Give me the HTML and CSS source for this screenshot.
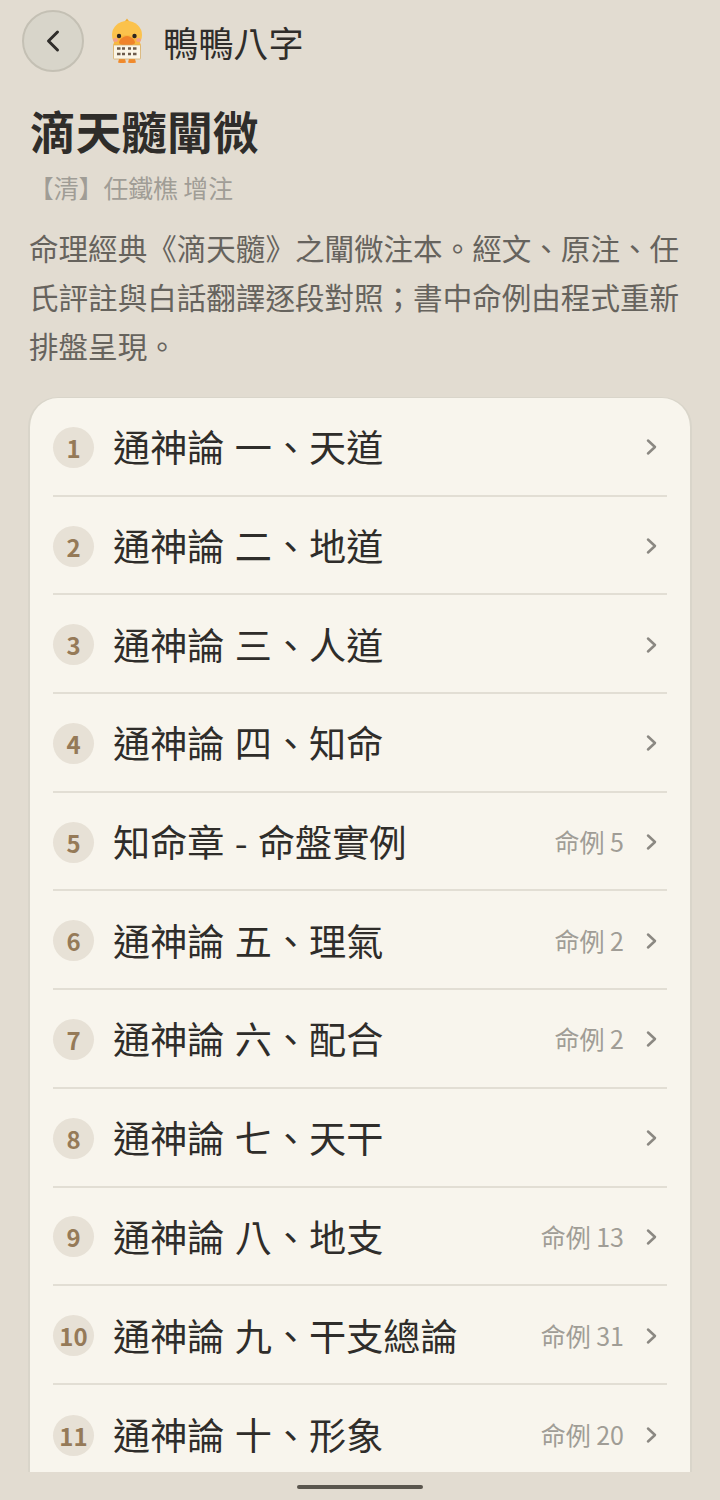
FILE: index.html
```html
<!DOCTYPE html>
<html lang="zh-Hant">
<head>
<meta charset="utf-8">
<title>滴天髓闡微</title>
<link rel="stylesheet" href="styles.css">
</head>
<body>
<div class="page">
  <header class="topbar">
    <button class="back" aria-label="返回">
      <svg viewBox="0 0 24 24" width="24" height="24"><path d="M16.500 3 7.500 12l9 9" fill="none" stroke="#2f2d2a" stroke-width="3" stroke-linecap="round" stroke-linejoin="round"/></svg>
    </button>
    <svg class="duck" viewBox="111 18 32 46" width="32" height="46" aria-hidden="true">
      <path d="M127 18.500c1 2 3 3 3.500 5.500h-7c.5-2.500 2.500-3.500 3.500-5.500z" fill="#f3ad2f"/>
      <ellipse cx="127" cy="35" rx="15" ry="14" fill="#fbc24c"/>
      <ellipse cx="127" cy="47" rx="14" ry="12" fill="#f8b83f"/>
      <path d="M119 59h6l1 3.500q-4 1-8 0zM129 59h6l1 3.500q-4 1-8 0z" fill="#f08a2c"/>
      <circle cx="119" cy="36" r="2.200" fill="#2b2320"/>
      <circle cx="134.500" cy="36" r="2.200" fill="#2b2320"/>
      <ellipse cx="115.500" cy="40" rx="2.500" ry="2" fill="#f3a08c"/>
      <ellipse cx="138.500" cy="40" rx="2.500" ry="2" fill="#f3a08c"/>
      <path d="M127 36c4 0 8 4 8 6.500 0 2-4 3-8 3s-8-1-8-3c0-2.500 4-6.500 8-6.500z" fill="#f0832a"/>
      <rect x="113.500" y="45" width="27" height="14" rx=".6" fill="#fbf5e6" stroke="#d2a75f" stroke-width=".7"/>
      <path d="M117 48.500h3.500M122 48.500h3M128 48.500h3M133 48.500h3.500M117 54h3.500M122 54h3M128 54h3M133 54h3.500" stroke="#6d5b4b" stroke-width="2.600"/>
    </svg>
    <span class="brand">鴨鴨八字</span>
  </header>

  <section class="intro">
    <h1 class="title">滴天髓闡微</h1>
    <p class="author">【清】任鐵樵 增注</p>
    <p class="desc">命理經典《滴天髓》之闡微注本。經文、原注、任氏評註與白話翻譯逐段對照；書中命例由程式重新排盤呈現。</p>
  </section>

  <div class="cardclip">
    <ul class="card">
      <li class="row"><span class="num">1</span><span class="name">通神論 一、天道</span><span class="chev"><svg viewBox="0 0 12 18" width="12" height="18"><path d="M2 2.500l7 6.500-7 6.500" fill="none" stroke="#8b8882" stroke-width="2.500" stroke-linecap="round" stroke-linejoin="round"/></svg></span></li>
      <li class="row"><span class="num">2</span><span class="name">通神論 二、地道</span><span class="chev"><svg viewBox="0 0 12 18" width="12" height="18"><path d="M2 2.500l7 6.500-7 6.500" fill="none" stroke="#8b8882" stroke-width="2.500" stroke-linecap="round" stroke-linejoin="round"/></svg></span></li>
      <li class="row"><span class="num">3</span><span class="name">通神論 三、人道</span><span class="chev"><svg viewBox="0 0 12 18" width="12" height="18"><path d="M2 2.500l7 6.500-7 6.500" fill="none" stroke="#8b8882" stroke-width="2.500" stroke-linecap="round" stroke-linejoin="round"/></svg></span></li>
      <li class="row"><span class="num">4</span><span class="name">通神論 四、知命</span><span class="chev"><svg viewBox="0 0 12 18" width="12" height="18"><path d="M2 2.500l7 6.500-7 6.500" fill="none" stroke="#8b8882" stroke-width="2.500" stroke-linecap="round" stroke-linejoin="round"/></svg></span></li>
      <li class="row"><span class="num">5</span><span class="name">知命章 - 命盤實例</span><span class="tag">命例 5</span><span class="chev"><svg viewBox="0 0 12 18" width="12" height="18"><path d="M2 2.500l7 6.500-7 6.500" fill="none" stroke="#8b8882" stroke-width="2.500" stroke-linecap="round" stroke-linejoin="round"/></svg></span></li>
      <li class="row"><span class="num">6</span><span class="name">通神論 五、理氣</span><span class="tag">命例 2</span><span class="chev"><svg viewBox="0 0 12 18" width="12" height="18"><path d="M2 2.500l7 6.500-7 6.500" fill="none" stroke="#8b8882" stroke-width="2.500" stroke-linecap="round" stroke-linejoin="round"/></svg></span></li>
      <li class="row"><span class="num">7</span><span class="name">通神論 六、配合</span><span class="tag">命例 2</span><span class="chev"><svg viewBox="0 0 12 18" width="12" height="18"><path d="M2 2.500l7 6.500-7 6.500" fill="none" stroke="#8b8882" stroke-width="2.500" stroke-linecap="round" stroke-linejoin="round"/></svg></span></li>
      <li class="row"><span class="num">8</span><span class="name">通神論 七、天干</span><span class="chev"><svg viewBox="0 0 12 18" width="12" height="18"><path d="M2 2.500l7 6.500-7 6.500" fill="none" stroke="#8b8882" stroke-width="2.500" stroke-linecap="round" stroke-linejoin="round"/></svg></span></li>
      <li class="row"><span class="num">9</span><span class="name">通神論 八、地支</span><span class="tag">命例 13</span><span class="chev"><svg viewBox="0 0 12 18" width="12" height="18"><path d="M2 2.500l7 6.500-7 6.500" fill="none" stroke="#8b8882" stroke-width="2.500" stroke-linecap="round" stroke-linejoin="round"/></svg></span></li>
      <li class="row"><span class="num">10</span><span class="name">通神論 九、干支總論</span><span class="tag">命例 31</span><span class="chev"><svg viewBox="0 0 12 18" width="12" height="18"><path d="M2 2.500l7 6.500-7 6.500" fill="none" stroke="#8b8882" stroke-width="2.500" stroke-linecap="round" stroke-linejoin="round"/></svg></span></li>
      <li class="row"><span class="num">11</span><span class="name">通神論 十、形象</span><span class="tag">命例 20</span><span class="chev"><svg viewBox="0 0 12 18" width="12" height="18"><path d="M2 2.500l7 6.500-7 6.500" fill="none" stroke="#8b8882" stroke-width="2.500" stroke-linecap="round" stroke-linejoin="round"/></svg></span></li>
    </ul>
  </div>

  <footer class="navbar"><span class="handle"></span></footer>
</div>
</body>
</html>
```

FILE: styles.css
```css
* { box-sizing: border-box; }
html, body { margin: 0; padding: 0; height: 100%; overflow: hidden; }
body { background: #e2dcd1; font-family: "Noto Sans CJK TC", "Noto Sans", sans-serif; color: #2f2d2a; }
.page { height: 1500px; display: flex; flex-direction: column; overflow: hidden; }

.topbar { display: flex; align-items: center; height: 84px; flex: none; padding: 0 0 0 22px; }
.back { width: 62px; height: 62px; border-radius: 50%; border: 2px solid #c4c0b4; background: #d8d5ca; display: flex; align-items: center; justify-content: center; padding: 0; flex: none; margin-top: -2px; }
.duck { margin: -2px 0 0 27px; flex: none; }
.brand { margin-left: 20px; font-size: 35.200px; line-height: 1; color: #2f2d2a; }

.intro { padding: 0 29px; flex: none; }
.title { margin: 16px 0 0 1px; font-size: 45.700px; line-height: 60px; font-weight: 700; color: #2f2d2a; }
.author { margin: 10px 0 0; font-size: 24.800px; line-height: 34px; color: #a09d96; }
.desc { margin: 19px 0 0; font-size: 29.550px; line-height: 49px; color: #66635d; }

.cardclip { flex: 1 1 0; min-height: 0; overflow: hidden; margin-top: 27px; padding: 0 28px; }
.card { list-style: none; margin: 0; padding: 0 23px; background: #f8f5ed; border: 2px solid #d9d5ca; border-top-width: 1px; border-bottom: 0; border-radius: 30px 30px 0 0; }
.row { display: flex; align-items: center; height: 98.700px; border-bottom: 2px solid #e2ded4; }
.row:last-child { border-bottom: 0; }
.num { flex: none; width: 41px; height: 41px; margin-top: 2px; border-radius: 50%; background: #e7e1d6; color: #957a58; font-size: 24px; font-weight: 700; line-height: 41px; text-align: center; }
.name { flex: 1 1 auto; margin-left: 19px; font-size: 37.150px; line-height: 48px; word-spacing: 2px; color: #2f2d2a; white-space: nowrap; }
.tag { flex: none; font-size: 25px; line-height: 34px; color: #a09d96; }
.chev { flex: none; width: 43px; display: flex; justify-content: flex-end; padding-right: 9px; margin-top: 2px; }

.navbar { flex: none; height: 28px; display: flex; justify-content: center; padding-top: 13px; }
.handle { width: 126px; height: 4px; border-radius: 2px; background: #5a564e; }
```
